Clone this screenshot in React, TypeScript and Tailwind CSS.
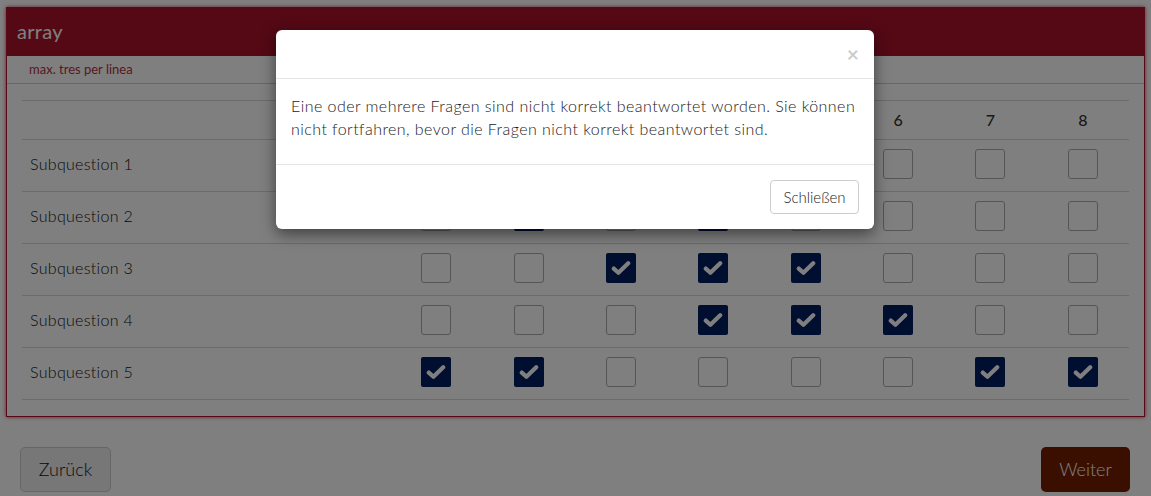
import React from "react";

const rows: number[][] = [
  [1, 3],
  [2, 4],
  [3, 4, 5],
  [4, 5, 6],
  [1, 2, 7, 8],
];

function Check({ on }: { on: boolean }) {
  if (on) {
    return (
      <div className="w-[30px] h-[30px] rounded-[2px] bg-[#001c5e] flex items-center justify-center mb-[3px]">
        <svg width="20" height="16" viewBox="0 0 20 16">
          <path d="M2.8 8.6 L7.4 12.8 L17.2 3.2" fill="none" stroke="#fff" strokeWidth="4.2" strokeLinecap="round" strokeLinejoin="round" />
        </svg>
      </div>
    );
  }
  return <div className="w-[30px] h-[30px] rounded-[3px] border border-[#aaaaaa] bg-white mb-[3px]" />;
}

export default function App() {
  const font = { fontFamily: "Lato, 'Open Sans', sans-serif" };
  return (
    <div className="relative w-[1151px] h-[496px] bg-white overflow-hidden text-[#333]" style={font}>
      <div className="pt-[7px] pl-[6px] pr-[6px]">
        <div className="border border-[#b0102c] shadow-[0_0_4px_rgba(176,16,44,0.8)] bg-white">
          <div className="h-[48px] bg-[#a8122a] flex items-center pl-[10px] pb-[2px] text-white text-[20px] tracking-[0.3px]">array</div>
          <div className="h-[28px] bg-white border-b border-[#cfcfcf] flex items-center pl-[22px] text-[13px] text-[#b3303c]">
            max. tres per linea
          </div>
          <div className="px-[15px] pt-[16px] pb-[16px]">
            <div className="grid grid-cols-[368px_repeat(8,1fr)] border-t border-[#d6d6d6] h-[39px] items-center text-[16px] font-medium text-[#333]">
              <div />
              {[1, 2, 3, 4, 5, 6, 7, 8].map((n) => (
                <div key={n} className="text-center">{n}</div>
              ))}
            </div>
            {rows.map((checked, i) => (
              <div
                key={i}
                className="grid grid-cols-[368px_repeat(8,1fr)] border-t border-[#d6d6d6] h-[52px] items-center"
              >
                <div className="pl-[8px] pb-[3px] text-[16px] font-light text-[#111] tracking-[0.3px]">Subquestion {i + 1}</div>
                {[1, 2, 3, 4, 5, 6, 7, 8].map((c) => (
                  <div key={c} className="flex justify-center">
                    <Check on={checked.includes(c)} />
                  </div>
                ))}
              </div>
            ))}
            <div className="border-t border-[#d6d6d6]" />
          </div>
        </div>
      </div>
      <div className="flex justify-between pl-[20px] pr-[21px] pt-[30px]">
        <button className="w-[91px] h-[45px] rounded-[5px] border border-[#cccccc] bg-[#efefef] text-[18px] font-light text-[#111]">
          Zurück
        </button>
        <button className="w-[89px] h-[45px] rounded-[5px] bg-[#741f00] text-[18px] font-light text-white">Weiter</button>
      </div>

      <div className="absolute inset-0 bg-black/50" />

      <div className="absolute top-[30px] left-[276px] w-[598px] bg-white rounded-[6px] shadow-[0_5px_15px_rgba(0,0,0,0.5)]">
        <div className="h-[49px] border-b border-[#e5e5e5] flex items-center justify-end pr-[15px]">
          <span className="text-[21px] font-bold text-[#000] opacity-20 leading-none -mt-[2px]">×</span>
        </div>
        <div className="px-[15px] pt-[15px] pb-[14px]">
          <p className="text-[16px] leading-[23px] font-light text-[#1a1a1a] mb-[10px] tracking-[0.45px]">
            Eine oder mehrere Fragen sind nicht korrekt beantwortet worden. Sie können nicht fortfahren, bevor die Fragen nicht korrekt beantwortet sind.
          </p>
        </div>
        <div className="border-t border-[#e5e5e5] p-[15px] flex justify-end">
          <button className="w-[89px] h-[34px] rounded-[4px] border border-[#cccccc] bg-white text-[15px] font-light text-[#1a1a1a]">
            Schließen
          </button>
        </div>
      </div>
    </div>
  );
}
